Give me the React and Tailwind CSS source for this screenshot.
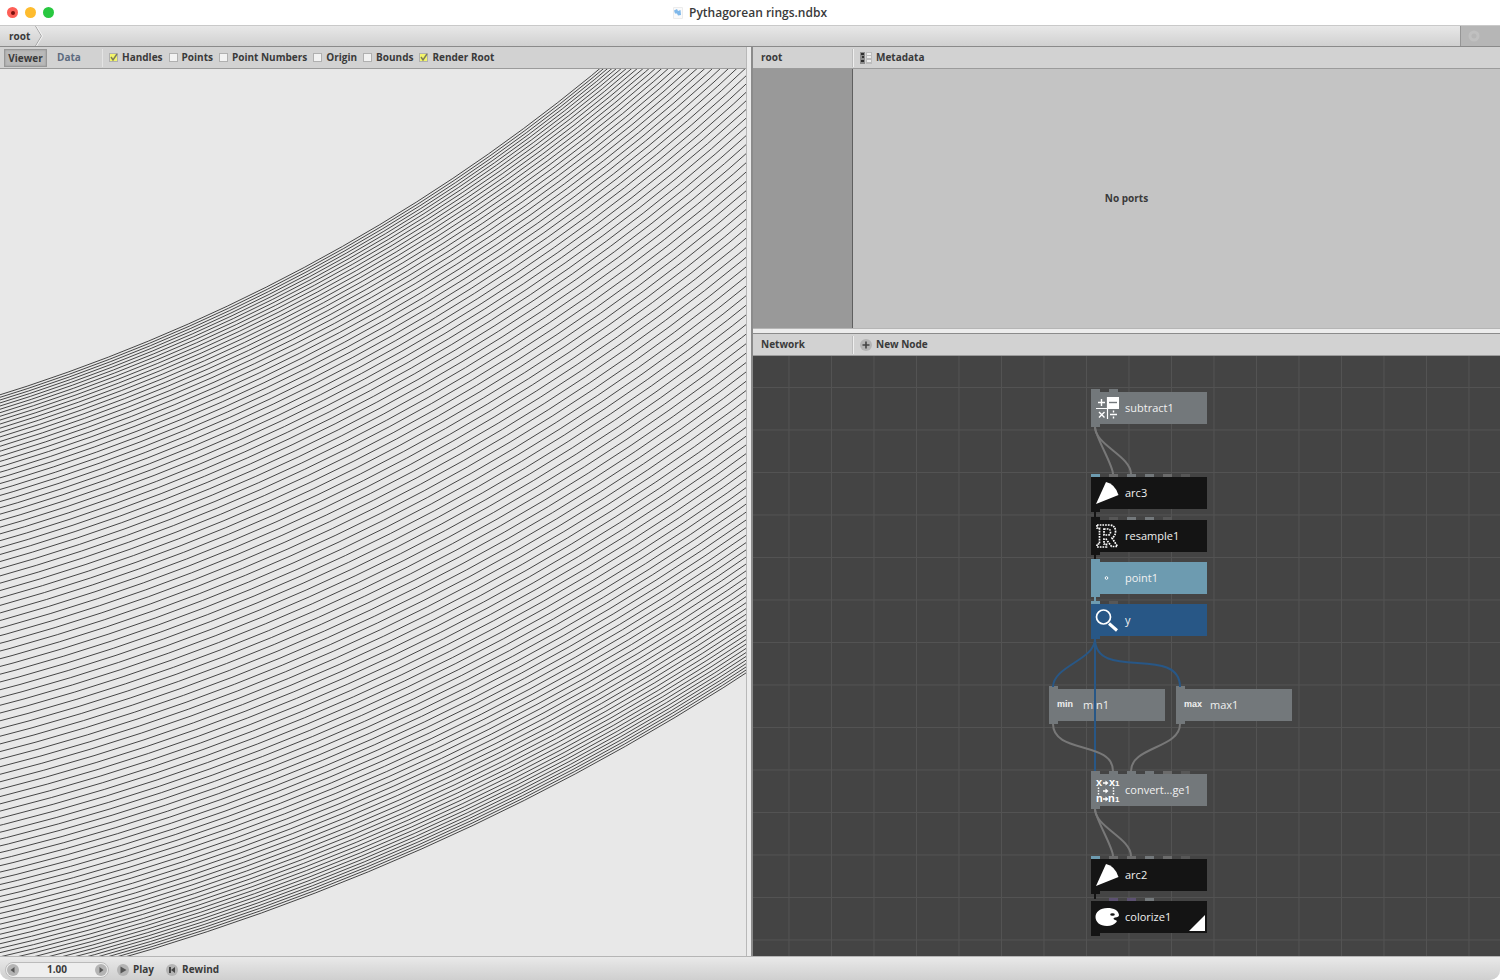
import { useState } from "react";

const RING_COUNT = 102;
const RING_CENTER = { x: -525, y: -1354 };

// radii follow the sine of points spread evenly over a 144 degree arc
const rings = Array.from({ length: RING_COUNT }, (_, i) => {
  const angle = ((-72 + (144 * i) / (RING_COUNT - 1)) * Math.PI) / 180;
  return 2047.25 + 302 * Math.sin(angle);
});

const viewOptions = [
  { id: "handles", label: "Handles", checked: true },
  { id: "points", label: "Points", checked: false },
  { id: "point-numbers", label: "Point Numbers", checked: false },
  { id: "origin", label: "Origin", checked: false },
  { id: "bounds", label: "Bounds", checked: false },
  { id: "render-root", label: "Render Root", checked: true },
];

const GRAY = "bg-[#73787b]";
const BLACK = "bg-[#141414]";
const STEEL = "bg-[#6d9bb0]";
const BLUE = "bg-[#285786]";
const DIM = "bg-[#6b6b6b]";
const DARK = "bg-[#575757]";
const PLUM = "bg-[#5b5070]";
const NONE = "bg-transparent";

const nodes = [
  { name: "subtract1", icon: "math", x: 338, y: 36, color: GRAY, ports: [GRAY, GRAY] },
  { name: "arc3", icon: "arc", x: 338, y: 121, color: BLACK, ports: [STEEL, DIM, GRAY, GRAY, DIM, DARK] },
  { name: "resample1", icon: "resample", x: 338, y: 164, color: BLACK, ports: [BLACK, DARK, GRAY, GRAY, DARK] },
  { name: "point1", icon: "point", x: 338, y: 206, color: STEEL, ports: [STEEL] },
  { name: "y", icon: "lookup", x: 338, y: 248, color: BLUE, ports: [STEEL, DARK] },
  { name: "min1", icon: "min", x: 296, y: 333, color: GRAY, ports: [GRAY] },
  { name: "max1", icon: "max", x: 423, y: 333, color: GRAY, ports: [GRAY] },
  { name: "convert...ge1", icon: "convert", x: 338, y: 418, color: GRAY, ports: [GRAY, GRAY, GRAY, GRAY, DIM, DARK] },
  { name: "arc2", icon: "arc", x: 338, y: 503, color: BLACK, ports: [STEEL, DIM, DIM, GRAY, DIM, DARK] },
  { name: "colorize1", icon: "colorize", x: 338, y: 545, color: BLACK, ports: [NONE, PLUM, PLUM, GRAY], rendered: true },
];

const connections = [
  { from: [342, 71], to: [360, 118], color: "#787878" },
  { from: [342, 71], to: [378, 118], color: "#787878" },
  { from: [342, 156], to: [342, 161], color: "#141414" },
  { from: [342, 199], to: [342, 203], color: "#141414" },
  { from: [342, 241], to: [342, 246], color: "#6d9bb0" },
  { from: [342, 283], to: [300, 331], color: "#285786" },
  { from: [342, 283], to: [427, 331], color: "#285786" },
  { from: [342, 283], to: [342, 415], color: "#285786" },
  { from: [300, 368], to: [360, 415], color: "#787878" },
  { from: [427, 368], to: [378, 415], color: "#787878" },
  { from: [342, 453], to: [360, 500], color: "#787878" },
  { from: [342, 453], to: [378, 500], color: "#787878" },
  { from: [342, 538], to: [342, 543], color: "#141414" },
];

const connectionPath = ({ from, to }) => {
  const half = Math.abs(to[0] - from[0]) / 2;
  return `M${from[0]} ${from[1]}C${from[0]} ${from[1] + half} ${to[0]} ${to[1] - half} ${to[0]} ${to[1]}`;
};

function NodeIcon({ type }) {
  return (
    <svg width="26" height="26" viewBox="0 0 26 26" className="shrink-0" aria-hidden="true">
      {type === "math" && (
        <g fill="none" stroke="#fff" strokeWidth="1.4">
          <rect x="12" y="2" width="12" height="11" fill="#fff" stroke="none" />
          <path d="M14 7.500h8" stroke="#73787b" />
          <path d="M1 13.500h23M12.500 2v22" strokeWidth="1.200" />
          <path d="M3 7.500h7M6.500 4v7" />
          <path d="M4 17l5.500 5.500M9.500 17L4 22.500" />
          <path d="M15 19.500h7M18.500 15.500v2M18.500 21.500v2" />
        </g>
      )}
      {type === "arc" && <path d="M1 24L11 2Q20 4 23.500 15Z" fill="#fff" />}
      {type === "resample" && (
        <g fill="none" stroke="#fff" strokeWidth="1.700" strokeDasharray="1.700 1">
          <path d="M2 2H14Q20.500 2 20.500 8.500Q20.500 13 17 15L22.500 23.500H16.500L11 16H9V21H11.500V24H2V21H4.500V5H2Z" />
          <path d="M9 6H13Q15.500 6 15.500 9Q15.500 12 13 12H9Z" />
        </g>
      )}
      {type === "point" && <circle cx="11.500" cy="13" r="1.300" fill="#5588a5" stroke="#fff" strokeWidth="1" />}
      {type === "lookup" && (
        <g fill="none" stroke="#fff">
          <circle cx="8.500" cy="10" r="7" strokeWidth="1.700" />
          <path d="M14 16.500L22 23.500" strokeWidth="3" />
        </g>
      )}
      {type === "convert" && (
        <g fill="#fff" className="font-['Liberation_Sans',sans-serif] font-bold">
          <text x="1" y="9" fontSize="11">x</text>
          <text x="14" y="9" fontSize="11">x</text>
          <text x="20" y="9" fontSize="8">1</text>
          <text x="1" y="25" fontSize="11">n</text>
          <text x="13" y="25" fontSize="11">n</text>
          <text x="20" y="25" fontSize="8">1</text>
          <path d="M8 6h4M8 14h4M8 22h4" stroke="#fff" strokeWidth="1.500" />
          <path d="M10.500 3.500l3 2.500-3 2.500zM10.500 11.500l3 2.500-3 2.500zM10.500 19.500l3 2.500-3 2.500z" />
          <path d="M3.500 10.500v7M18.500 10.500v7" stroke="#fff" strokeWidth="1.500" strokeDasharray="1.500 1.300" />
        </g>
      )}
      {type === "colorize" && (
        <>
          <path d="M12.500 4C19 4 23.500 6.500 24 11Q24 13 20 13.500Q17 14.500 20 16Q22.500 16.500 21.500 18Q18 22 12 22C5 22 .5 18 .5 13S5 4 12.500 4Z" fill="#fff" />
          <ellipse cx="17.500" cy="10.500" rx="2.300" ry="1.300" fill="#141414" />
        </>
      )}
    </svg>
  );
}

function Node({ node }) {
  return (
    <div
      className={`absolute flex h-8 w-[116px] items-center text-[11px] text-[#f0f0f0] ${node.color}`}
      style={{ left: node.x, top: node.y }}
    >
      {/* input ports */}
      <div className="absolute -top-[3px] left-0 flex gap-[9px]">
        {node.ports.map((port, i) => (
          <span key={i} className={`h-[3px] w-[9px] ${port}`} />
        ))}
      </div>
      {/* output port */}
      <span className={`absolute -bottom-[3px] left-0 h-[3px] w-[9px] ${node.color}`} />
      <span className="flex w-[34px] shrink-0 justify-start pl-1">
        {node.icon === "min" || node.icon === "max" ? (
          <span className="pl-1 font-['Liberation_Sans',sans-serif] text-[9px] font-bold">{node.icon}</span>
        ) : (
          <NodeIcon type={node.icon} />
        )}
      </span>
      <span>{node.name}</span>
      {node.rendered && (
        <svg width="16" height="16" className="absolute right-[2px] bottom-[2px]" aria-hidden="true">
          <path d="M16 0V16H0Z" fill="#fff" />
        </svg>
      )}
    </div>
  );
}

function RoundIcon({ children }) {
  return (
    <svg width="12" height="12" viewBox="0 0 12 12" className="shrink-0" aria-hidden="true">
      <circle cx="6" cy="6" r="6" fill="#b4b4b4" />
      {children}
    </svg>
  );
}

function PaneHeader({ title, children }) {
  return (
    <div className="flex h-[22px] shrink-0 items-center border-b border-[#9b9b9b] bg-[#d2d2d2]">
      <span className="w-[100px] pl-2">{title}</span>
      <span className="h-[18px] w-px bg-[#efefef] shadow-[-1px_0_0_#bdbdbd]" />
      {children}
    </div>
  );
}

function Viewer() {
  const [options, setOptions] = useState(viewOptions);

  const toggle = (id) =>
    setOptions((prev) => prev.map((o) => (o.id === id ? { ...o, checked: !o.checked } : o)));

  return (
    <section className="flex min-w-0 flex-[746] flex-col">
      <div className="flex h-[22px] shrink-0 items-center border-b border-[#9b9b9b] bg-[#d2d2d2] pl-1">
        <button className="h-[18px] w-[43px] border border-[#989898] bg-[#b9b9b9] leading-4 shadow-[inset_0_0_2px_#8e8e8e]">
          Viewer
        </button>
        <button className="w-11 text-[#5d6b80]">Data</button>
        <span className="mr-1.5 ml-[11px] h-[18px] w-px bg-[#e4e4e4]" />
        <div className="flex items-center gap-1.5">
          {options.map((option) => (
            <label key={option.id} htmlFor={option.id} className="flex items-center gap-1 whitespace-nowrap">
              <span className="grid place-items-center">
                <input
                  id={option.id}
                  type="checkbox"
                  checked={option.checked}
                  onChange={() => toggle(option.id)}
                  className="col-start-1 row-start-1 size-[9px] appearance-none border border-[#b0b0b0] bg-[#f2f2f2] checked:bg-[#f3f56c]"
                />
                {option.checked && (
                  <svg width="9" height="9" className="pointer-events-none col-start-1 row-start-1" aria-hidden="true">
                    <path d="M2 4L4 7L8 1" fill="none" stroke="#7c7c5c" strokeWidth="1.500" />
                  </svg>
                )}
              </span>
              {option.label}
            </label>
          ))}
        </div>
      </div>
      <div className="min-h-0 flex-1 overflow-hidden bg-[#e8e8e8]">
        <svg className="block h-full w-full" aria-label="Rings">
          <g fill="none" stroke="#1c1c1c" strokeWidth="0.8">
            {rings.map((r) => (
              <circle key={r} cx={RING_CENTER.x} cy={RING_CENTER.y} r={r} />
            ))}
          </g>
        </svg>
      </div>
    </section>
  );
}

function Ports() {
  return (
    <section className="flex min-h-0 flex-[281] flex-col">
      <PaneHeader title="root">
        <button className="flex items-center gap-1 pl-1.5">
          <svg width="12" height="12" className="shrink-0" aria-hidden="true">
            <path d="M0 0H5V12H0Z" fill="#8c8c8c" />
            <path d="M6 0H12V12H6Z" fill="#bcbcbc" />
            <path d="M1 2h3M2 5h2M1 9h3" stroke="#303030" strokeWidth="2" />
            <path d="M7 2h4M7 5h4M7 9h4" stroke="#ededed" strokeWidth="2" />
          </svg>
          Metadata
        </button>
      </PaneHeader>
      <div className="flex flex-1 items-center justify-center bg-[linear-gradient(to_right,#999_99px,#5f5f5f_99px,#5f5f5f_100px,#c4c4c4_100px)]">
        No ports
      </div>
    </section>
  );
}

function Network() {
  return (
    <section className="flex min-h-0 flex-[622] flex-col">
      <PaneHeader title="Network">
        <button className="flex items-center gap-1 pl-1.5">
          <RoundIcon>
            <path d="M6 2.500V9.500M2.500 6H9.500" stroke="#444" strokeWidth="1.600" />
          </RoundIcon>
          New Node
        </button>
      </PaneHeader>
      <div className="relative flex-1 overflow-hidden bg-[#444] font-normal">
        <svg className="absolute inset-0 h-full w-full" aria-hidden="true">
          <defs>
            <pattern id="grid" x="35.500" y="31" width="42.500" height="42.500" patternUnits="userSpaceOnUse">
              <path d="M.5 0V42.500M0 .5H42.500" stroke="#535353" strokeWidth="1" />
            </pattern>
          </defs>
          <rect width="100%" height="100%" fill="url(#grid)" />
        </svg>
        {nodes.map((node) => (
          <Node key={node.name} node={node} />
        ))}
        <svg className="pointer-events-none absolute inset-0 h-full w-full" aria-hidden="true">
          {connections.map((c, i) => (
            <path key={i} d={connectionPath(c)} fill="none" stroke={c.color} strokeWidth="2" />
          ))}
        </svg>
      </div>
    </section>
  );
}

function AnimationBar() {
  const [frame, setFrame] = useState("1.00");

  return (
    <footer className="flex h-6 shrink-0 items-center border-t border-[#b5b5b5] bg-linear-to-b from-[#e9e9e9] to-[#cfcfcf] pt-0.5 pl-[5px]">
      <div className="flex h-4 w-[104px] items-center justify-between rounded-full border border-[#bbb] bg-[#eee] px-px">
        <button aria-label="Previous frame">
          <RoundIcon>
            <path d="M7.500 3V9L3.500 6Z" fill="#555" />
          </RoundIcon>
        </button>
        <input
          aria-label="Frame"
          value={frame}
          onChange={(e) => setFrame(e.target.value)}
          className="w-[60px] bg-transparent text-center outline-none"
        />
        <button aria-label="Next frame">
          <RoundIcon>
            <path d="M4.500 3V9L8.500 6Z" fill="#555" />
          </RoundIcon>
        </button>
      </div>
      <button className="ml-2 flex items-center gap-1">
        <RoundIcon>
          <path d="M3.500 2.500V9.500L9.500 6Z" fill="#555" />
        </RoundIcon>
        Play
      </button>
      <button className="ml-3 flex items-center gap-1">
        <RoundIcon>
          <path d="M3 3H5V9H3ZM9 3V9L5 6Z" fill="#444" />
        </RoundIcon>
        Rewind
      </button>
    </footer>
  );
}

function App() {
  return (
    <div className="flex h-screen flex-col overflow-hidden rounded-b-[10px] bg-[#e8e8e8] font-['Open_Sans',sans-serif] text-[10px] font-bold text-[#3a3a3a]">
      {/* Title bar */}
      <header className="grid h-[25px] shrink-0 grid-cols-[1fr_auto_1fr] items-center bg-white">
        <div className="flex gap-[7px] pl-[7px]">
          <button aria-label="Close" className="grid size-[11px] place-items-center rounded-full bg-[#fe5f57]">
            <span className="size-1 rounded-full bg-[#7a0f0c]" />
          </button>
          <button aria-label="Minimize" className="size-[11px] rounded-full bg-[#febc2e]" />
          <button aria-label="Zoom" className="size-[11px] rounded-full bg-[#28c840]" />
        </div>
        <h1 className="flex items-center gap-1.5 text-xs font-semibold">
          <svg width="10" height="12" viewBox="0 0 10 12" aria-hidden="true">
            <path d="M.5 .5H9.500V11.500H.5Z" fill="#fafafa" stroke="#ececec" />
            <path d="M1 3.500L4 2L5 4L7.500 3L8 8L5 8.500L4 6.500L2 6.500Z" fill="#7fb8ea" />
          </svg>
          Pythagorean rings.ndbx
        </h1>
      </header>

      {/* Address bar */}
      <nav className="flex h-[22px] shrink-0 border-y border-t-[#c9c9c9] border-b-[#8a8a8a] bg-linear-to-b from-[#e8e8e8] to-[#d0d0d0]">
        <a href="#root" className="flex items-center pl-[9px]">
          root
        </a>
        <svg width="14" height="20" className="shrink-0" aria-hidden="true">
          <path d="M5.500 0L11.500 10L5.500 20" fill="none" stroke="#a3a3a3" />
          <path d="M6.500 0L12.500 10L6.500 20" fill="none" stroke="#f4f4f4" />
        </svg>
        <div className="ml-auto flex w-10 items-center border-l border-[#969696] bg-[#b6b6b6] pl-[7px]">
          <svg width="12" height="12" aria-hidden="true">
            <circle cx="6" cy="6" r="4" fill="none" stroke="#c0c0c0" strokeWidth="3" />
          </svg>
        </div>
      </nav>

      <main className="flex min-h-0 flex-1">
        <Viewer />
        <div className="w-[7px] shrink-0 border-r-2 border-l border-r-[#8b8b8b] border-l-[#b8b8b8] bg-[#ececec]" />
        <div className="flex min-w-0 flex-[747] flex-col">
          <Ports />
          <div className="h-1.5 shrink-0 border-t border-b border-t-[#b5b5b5] border-b-[#8b8b8b] bg-[#ececec]" />
          <Network />
        </div>
      </main>

      <AnimationBar />
    </div>
  );
}

export default App;
